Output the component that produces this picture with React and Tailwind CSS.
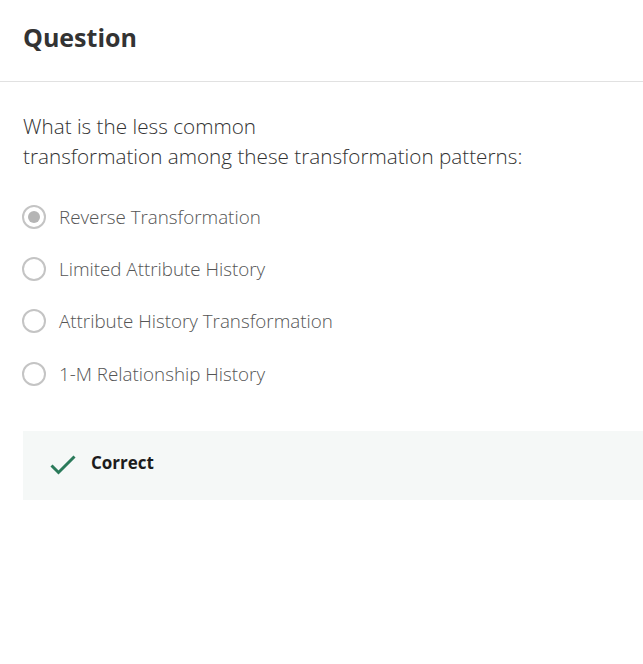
import React from 'react';

const options = [
    'Reverse Transformation',
    'Limited Attribute History',
    'Attribute History Transformation',
    '1-M Relationship History',
];

export default function App() {
    const selected = 0;

    return (
        <div className="w-[643px] h-[664px] bg-white overflow-hidden font-['Open_Sans',sans-serif]">
            {/* Header */}
            <div className="h-[82px] px-[23px] pt-[19px] border-b border-[#e1e1e1]">
                <h2 className="text-[25px] leading-[36px] font-bold text-[#333333]">Question</h2>
            </div>

            <div className="pl-[23px]">
                {/* Prompt */}
                <p className="mt-[29px] w-[560px] text-[20.7px] leading-[30px] font-light text-[#333333]">
                    What is the less common
                    <br />
                    transformation among these transformation patterns:
                </p>

                {/* Options */}
                <div className="mt-[19.5px] flex flex-col">
                    {options.map((label, index) => (
                        <label key={label} className="h-[52.4px] flex items-center gap-[13px]">
                            <span className="w-[24px] h-[24px] -ml-[1px] rounded-full border-2 border-[#c4c4c4] flex items-center justify-center">
                                {selected === index && (
                                    <span className="w-[12px] h-[12px] rounded-full bg-[#b5b5b5]" />
                                )}
                            </span>
                            <span className="text-[18.8px] font-light text-[#555555]">{label}</span>
                        </label>
                    ))}
                </div>

                {/* Feedback */}
                <div className="mt-[31px] h-[69px] bg-[#f5f8f7] flex items-center pl-[27px] pb-[5px] gap-[15px]">
                    <svg width="26" height="20" viewBox="0 0 26 20" fill="none" className="mt-[3px]">
                        <path d="M1.5 10.5 L8.5 17.5 L24.5 1.5" stroke="#2a7a5a" strokeWidth="3" />
                    </svg>
                    <span className="text-[17px] font-bold text-[#1c1c1c]">Correct</span>
                </div>
            </div>
        </div>
    );
}
